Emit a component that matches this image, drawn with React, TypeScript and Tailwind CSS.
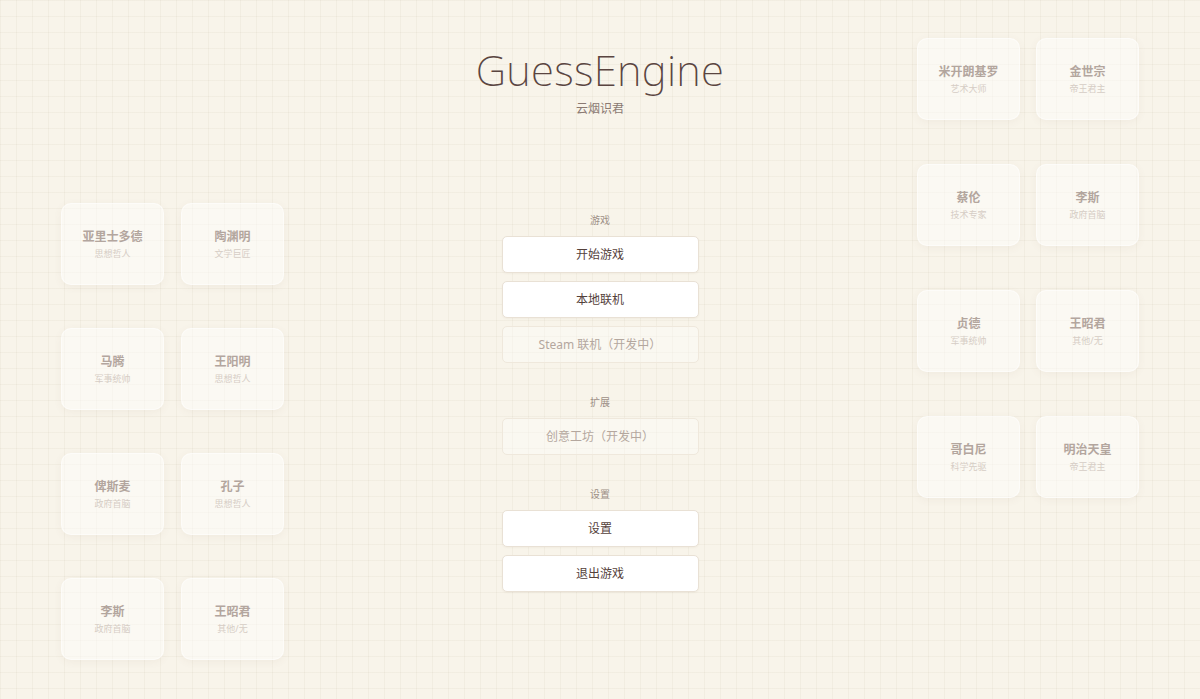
import React from 'react';

type Figure = { name: string; role: string };

const leftFigures: Figure[] = [
  { name: '亚里士多德', role: '思想哲人' },
  { name: '陶渊明', role: '文学巨匠' },
  { name: '马腾', role: '军事统帅' },
  { name: '王阳明', role: '思想哲人' },
  { name: '俾斯麦', role: '政府首脑' },
  { name: '孔子', role: '思想哲人' },
  { name: '李斯', role: '政府首脑' },
  { name: '王昭君', role: '其他/无' },
];

const rightFigures: Figure[] = [
  { name: '米开朗基罗', role: '艺术大师' },
  { name: '金世宗', role: '帝王君主' },
  { name: '蔡伦', role: '技术专家' },
  { name: '李斯', role: '政府首脑' },
  { name: '贞德', role: '军事统帅' },
  { name: '王昭君', role: '其他/无' },
  { name: '哥白尼', role: '科学先驱' },
  { name: '明治天皇', role: '帝王君主' },
];

const FigureCard: React.FC<{ figure: Figure }> = ({ figure }) => (
  <div className="w-[103px] h-[82px] rounded-[10px] bg-white/45 border border-white/50 shadow-[0_2px_8px_rgba(120,90,60,0.06)] flex flex-col items-center justify-center gap-[2px]">
    <span className="text-[12px] font-bold leading-[16px] text-[#b3a69e]">{figure.name}</span>
    <span className="text-[9px] leading-[13px] text-[#d6cdc5]">{figure.role}</span>
  </div>
);

const MenuButton: React.FC<{ label: string; disabled?: boolean }> = ({ label, disabled }) => (
  <button
    className={`w-[197px] h-[37px] rounded-[5px] border text-[12px] flex items-center justify-center ${
      disabled
        ? 'bg-white/35 border-[#efe8dc] text-[#b4a79e]'
        : 'bg-white border-[#e9e1d5] text-[#54413b] shadow-[0_1px_2px_rgba(120,90,60,0.05)]'
    }`}
  >
    {label}
  </button>
);

const Section: React.FC<{ title: string; children: React.ReactNode }> = ({ title, children }) => (
  <div className="flex flex-col items-center">
    <span className="text-[10px] leading-[16px] text-[#9d8f86] mb-[8px]">{title}</span>
    <div className="flex flex-col gap-[8px]">{children}</div>
  </div>
);

export default function App() {
  return (
    <div
      className="relative w-full h-[699px] overflow-hidden bg-[#f8f4ea] bg-[linear-gradient(rgba(150,120,90,0.06)_1px,transparent_1px),linear-gradient(90deg,rgba(150,120,90,0.06)_1px,transparent_1px)] bg-[size:16px_16px]"
      style={{ fontFamily: '"Noto Sans", "Noto Sans CJK SC", sans-serif' }}
    >
      {/* decorative figure cards */}
      <div className="absolute left-[61px] top-[203px] grid grid-cols-2 gap-x-[17px] gap-y-[43px]">
        {leftFigures.map((f, i) => (
          <FigureCard key={i} figure={f} />
        ))}
      </div>
      <div className="absolute left-[917px] top-[38px] grid grid-cols-2 gap-x-[16px] gap-y-[44px]">
        {rightFigures.map((f, i) => (
          <FigureCard key={i} figure={f} />
        ))}
      </div>

      {/* main menu */}
      <div className="relative flex flex-col items-center pt-[44px]">
        <h1 className="text-[42px] font-extralight leading-[52px] tracking-[0.3px] text-[#5a4541]">GuessEngine</h1>
        <p className="mt-[4px] text-[12px] leading-[18px] text-[#8b7a72]">云烟识君</p>

        <div className="mt-[94px] flex flex-col gap-[31px]">
          <Section title="游戏">
            <MenuButton label="开始游戏" />
            <MenuButton label="本地联机" />
            <MenuButton label="Steam 联机（开发中）" disabled />
          </Section>
          <Section title="扩展">
            <MenuButton label="创意工坊（开发中）" disabled />
          </Section>
          <Section title="设置">
            <MenuButton label="设置" />
            <MenuButton label="退出游戏" />
          </Section>
        </div>
      </div>
    </div>
  );
}
